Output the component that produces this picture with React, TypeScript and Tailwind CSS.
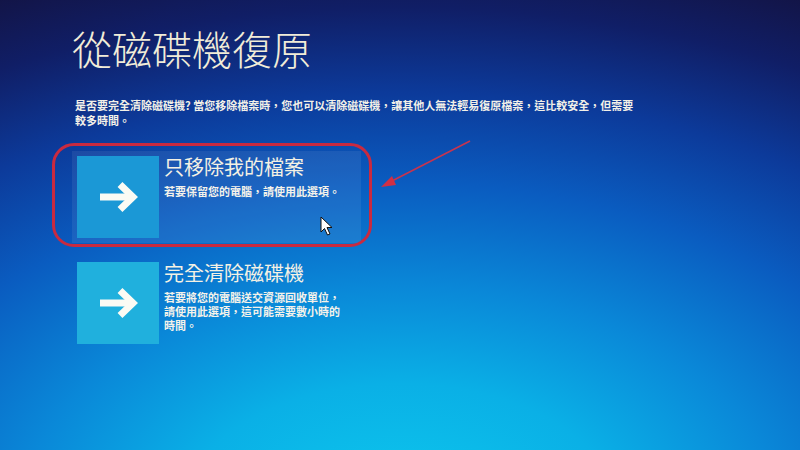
import React from "react";

const cjk = { fontFamily: '"Noto Sans CJK TC", "Noto Sans", sans-serif' };

function ArrowTile({ tone }: { tone: string }) {
  return (
    <div className={`flex h-[82px] w-[82px] shrink-0 items-center justify-center ${tone}`}>
      <svg width="40" height="32" viewBox="0 0 40 32" fill="none">
        <path d="M2 16H34" stroke="#fbfbf4" strokeWidth="7" />
        <path d="M22 3.5L35 16L22 28.5" stroke="#fbfbf4" strokeWidth="7" strokeLinejoin="miter" />
      </svg>
    </div>
  );
}

function Option({
  title,
  desc,
  tone,
  active,
}: {
  title: string;
  desc: string;
  tone: string;
  active?: boolean;
}) {
  return (
    <div className={`flex w-[289px] gap-[5px] p-[5px] ${active ? "bg-[#ffffff12]" : ""}`}>
      <ArrowTile tone={tone} />
      <div className="flex flex-col">
        <div className="text-[20px] leading-[22px] text-[#f4f1e4]">{title}</div>
        <p className="mt-[6px] w-[178px] text-[11px] font-bold leading-[14px] text-[#f4f2ea]">{desc}</p>
      </div>
    </div>
  );
}

export default function App() {
  return (
    <div
      lang="zh-Hant-TW"
      className="relative h-[450px] w-[800px] overflow-hidden bg-[radial-gradient(ellipse_125%_135%_at_50%_115%,#0dcaee_0%,#0ab0e6_22%,#0a88d8_38%,#0a5cc0_55%,#0c3a9a_70%,#101e66_84%,#140f36_100%)]"
      style={cjk}
    >
      <div className="flex flex-col pl-[72px] pt-[28px]">
        <h1 className="text-[40px] font-light leading-none text-[#f1ecd8]">從磁碟機復原</h1>
        <p className="ml-[3px] mt-[30px] w-[562px] text-[11px] font-bold leading-[15px] text-[#f2f0e8]">
          是否要完全清除磁碟機? 當您移除檔案時，您也可以清除磁碟機，讓其他人無法輕易復原檔案，這比較安全，但需要較多時間。
        </p>

        <div className="mt-[23px] flex flex-col gap-[14px]">
          <Option
            active
            tone="bg-[#1b98d6]"
            title="只移除我的檔案"
            desc="若要保留您的電腦，請使用此選項。"
          />
          <Option
            tone="bg-[#20b0dd]"
            title="完全清除磁碟機"
            desc="若要將您的電腦送交資源回收單位，請使用此選項，這可能需要數小時的時間。"
          />
        </div>
      </div>

      {/* red annotation ring */}
      <div className="pointer-events-none absolute left-[52px] top-[143px] h-[104px] w-[320px] rounded-[22px] border-[3px] border-[#c92a40]" />

      {/* annotation arrow + mouse cursor */}
      <svg className="pointer-events-none absolute inset-0" width="800" height="450" viewBox="0 0 800 450">
        <line x1="470" y1="141" x2="390" y2="182" stroke="#c8344e" strokeWidth="1.6" />
        <path d="M381 187L392 176L396 185Z" fill="#cf2f45" />
        <path
          d="M321 217V232L324.5 228.5L327.5 235L330 234L327 227.5H332Z"
          fill="#ffffff"
          stroke="#111"
          strokeWidth="1"
          strokeLinejoin="round"
        />
      </svg>
    </div>
  );
}
